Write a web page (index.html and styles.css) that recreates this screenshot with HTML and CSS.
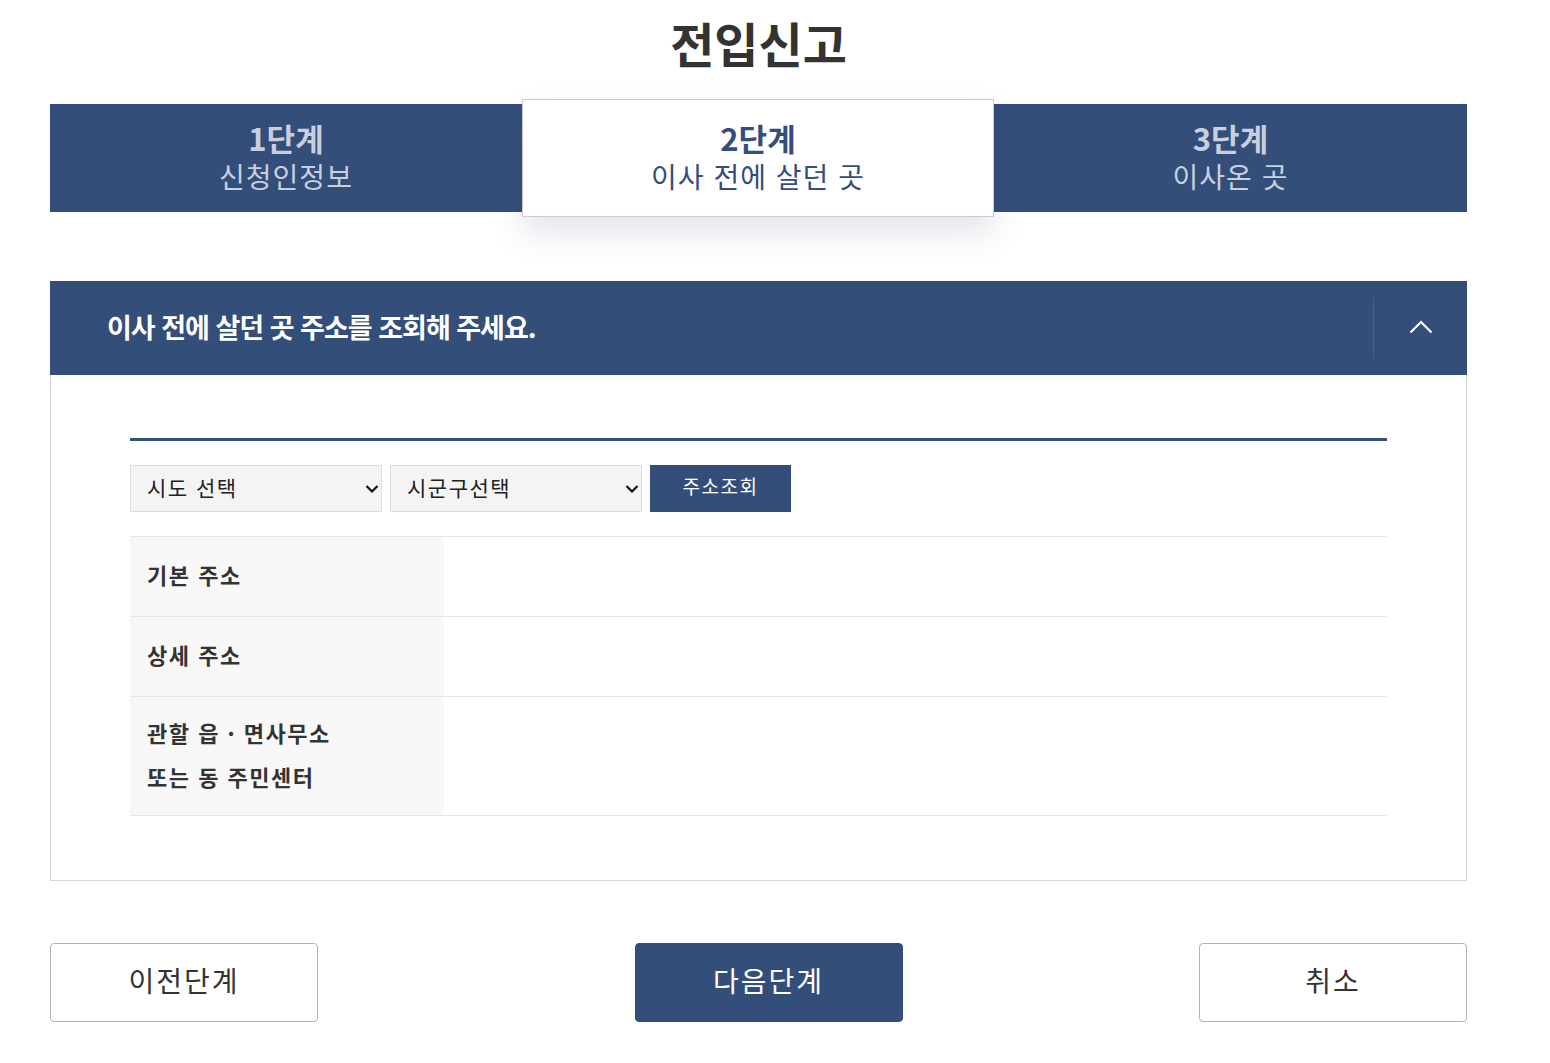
FILE: index.html
```html
<!DOCTYPE html>
<html lang="ko">
<head>
<meta charset="utf-8">
<title>전입신고</title>
<link rel="stylesheet" href="styles.css">
</head>
<body>
<div class="page">
  <h1 class="title">전입신고</h1>
  <ol class="steps">
    <li class="step"><strong>1단계</strong><span>신청인정보</span></li>
    <li class="step active"><strong>2단계</strong><span>이사 전에 살던 곳</span></li>
    <li class="step"><strong>3단계</strong><span>이사온 곳</span></li>
  </ol>

  <section class="panel">
    <div class="panel-head">
      <h2>이사 전에 살던 곳 주소를 조회해 주세요.</h2>
      <button class="toggle" aria-label="접기">
        <svg width="24" height="16" viewBox="0 0 24 16"><path d="M1.5 13.5 L12 3 L22.5 13.5" fill="none" stroke="#fff" stroke-width="2.2"/></svg>
      </button>
    </div>
    <div class="panel-body">
      <div class="search">
        <div class="sel">
          <select><option>시도 선택</option></select>
          <svg class="arrow" width="14" height="10" viewBox="0 0 14 10"><path d="M1.5 2 L7 7.5 L12.5 2" fill="none" stroke="#111" stroke-width="2.2"/></svg>
        </div>
        <div class="sel">
          <select><option>시군구선택</option></select>
          <svg class="arrow" width="14" height="10" viewBox="0 0 14 10"><path d="M1.5 2 L7 7.5 L12.5 2" fill="none" stroke="#111" stroke-width="2.2"/></svg>
        </div>
        <button class="btn-search">주소조회</button>
      </div>
      <table class="info">
        <tr><th>기본 주소</th><td></td></tr>
        <tr><th>상세 주소</th><td></td></tr>
        <tr class="tall"><th>관할 읍 · 면사무소<br>또는 동 주민센터</th><td></td></tr>
      </table>
    </div>
  </section>

  <div class="actions">
    <button class="btn btn-line">이전단계</button>
    <button class="btn btn-fill">다음단계</button>
    <button class="btn btn-line">취소</button>
  </div>
</div>
</body>
</html>
```

FILE: styles.css
```css
* { box-sizing: border-box; }
html, body { margin: 0; padding: 0; background: #fff; }
body {
  font-family: "Noto Sans CJK KR", "Noto Sans", sans-serif;
  color: #333;
}
.page {
  width: 1417px;
  margin-left: 50px;
}
.title {
  margin: 0;
  padding-top: 12px;
  height: 99px;
  text-align: center;
  font-size: 48px;
  line-height: 60px;
  font-weight: 700;
  color: #333;
  letter-spacing: 0;
}
.steps {
  list-style: none;
  margin: 0;
  padding: 0;
  display: grid;
  grid-template-columns: 472px 472px 473px;
  height: 118px;
}
.step {
  margin-top: 5px;
  height: 108px;
  background: #344e7a;
  color: #c9d0dd;
  display: flex;
  flex-direction: column;
  align-items: center;
  justify-content: center;
  padding-bottom: 3px;
}
.step strong {
  font-size: 31px;
  line-height: 38px;
  font-weight: 700;
  letter-spacing: 0;
}
.step span {
  font-size: 28px;
  line-height: 38px;
  font-weight: 400;
  letter-spacing: 1px;
}
.step.active {
  margin-top: 0;
  height: 118px;
  background: #fff;
  color: #344e7a;
  border: 1px solid #c7ccd7;
  position: relative;
  z-index: 1;
  box-shadow: 0 16px 30px rgba(40, 55, 90, 0.13);
}
.panel {
  margin-top: 64px;
  border: 1px solid #d6d6d6;
  border-top: 0;
}
.panel-head {
  height: 94px;
  margin: 0 -1px;
  background: #344e7a;
  display: flex;
  align-items: center;
}
.panel-head h2 {
  flex: 1;
  margin: 0;
  padding-left: 57px;
  padding-bottom: 2px;
  color: #fff;
  font-size: 27px;
  font-weight: 700;
  letter-spacing: -1px;
  line-height: 36px;
}
.toggle {
  width: 94px;
  height: 62px;
  border: 0;
  border-left: 1px solid #4a6290;
  background: transparent;
  padding: 0;
  display: flex;
  align-items: center;
  justify-content: center;
  padding-bottom: 2px;
}
.panel-body {
  padding: 63px 79px 64px 79px;
}
.search {
  border-top: 3px solid #34507c;
  padding-top: 24px;
  padding-bottom: 24px;
  display: flex;
  gap: 8px;
}
.sel {
  position: relative;
  width: 252px;
  height: 47px;
}
.sel select {
  appearance: none;
  -webkit-appearance: none;
  width: 100%;
  height: 100%;
  border: 1px solid #dcdcdc;
  background: #f4f4f4;
  font-family: inherit;
  font-size: 21px;
  letter-spacing: 1.5px;
  color: #222;
  padding: 0 16px 3px;
  border-radius: 0;
}
.sel .arrow {
  position: absolute;
  right: 3px;
  top: 19px;
}
.btn-search {
  width: 141px;
  height: 47px;
  border: 0;
  background: #344e7a;
  color: #fff;
  font-family: inherit;
  font-size: 19px;
  letter-spacing: 1.5px;
  padding: 0 0 7px;
}
.info {
  width: 100%;
  border-collapse: collapse;
}
.info tr {
  border-top: 1px solid #e6e6e6;
  border-bottom: 1px solid #e6e6e6;
}
.info th {
  width: 314px;
  height: 80px;
  background: #f8f8f8;
  text-align: left;
  padding: 0 0 5px 17px;
  font-size: 22px;
  font-weight: 700;
  color: #333;
  letter-spacing: 1.5px;
}
.info td { background: #fff; }
.info tr.tall th {
  height: 119px;
  line-height: 44px;
  padding-bottom: 4px;
}
.actions {
  margin-top: 62px;
  display: flex;
  justify-content: space-between;
}
.btn {
  width: 268px;
  height: 79px;
  border-radius: 4px;
  font-family: inherit;
  font-size: 28px;
  letter-spacing: 2px;
  padding: 0 0 6px;
}
.btn-line {
  background: #fff;
  border: 1px solid #b4b4b4;
  color: #333;
}
.btn-fill {
  margin-left: 20px;
  background: #344e7a;
  border: 1px solid #344e7a;
  color: #fff;
}
```
